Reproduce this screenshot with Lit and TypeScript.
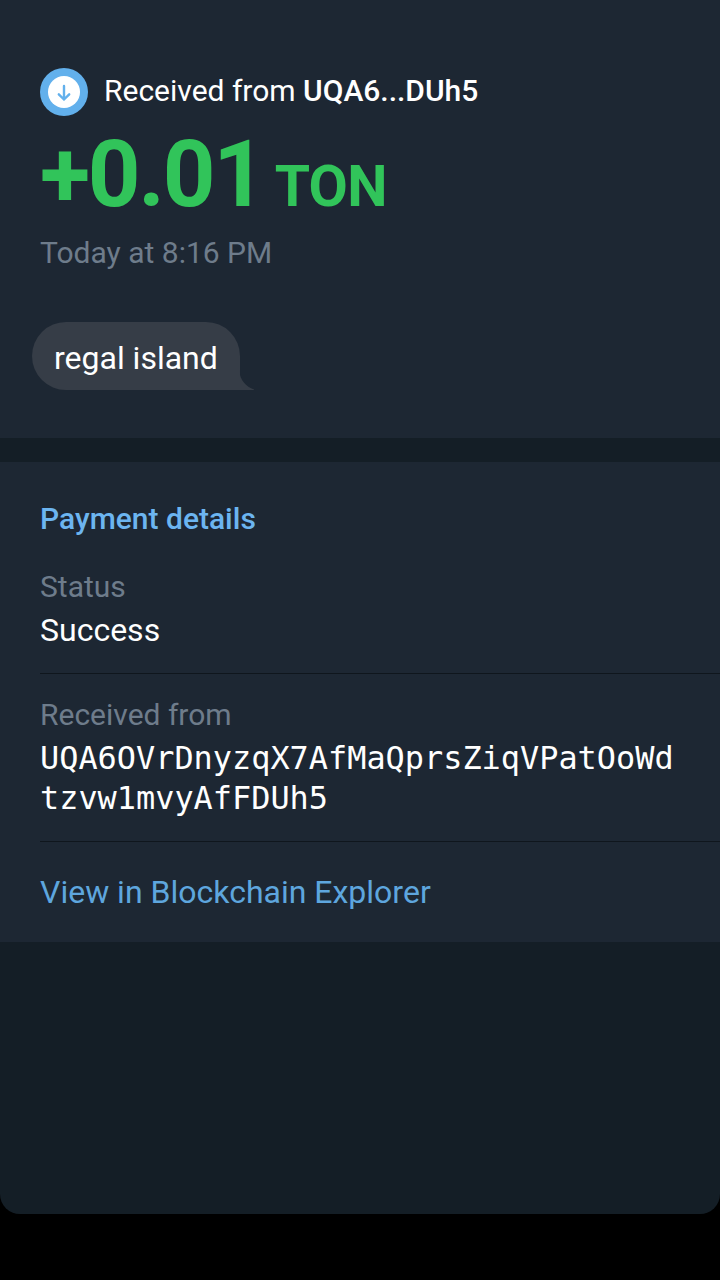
import { LitElement, html, css } from "lit";
import { customElement } from "lit/decorators.js";

@customElement("app-root")
export class AppRoot extends LitElement {
  static styles = css`
    :host { display: block; width: 720px; height: 1280px; background: #000; font-family: Roboto, sans-serif; color: #fff; overflow: hidden; }
    .sheet { height: 1214px; background: #141e26; border-radius: 0 0 20px 20px; overflow: hidden; }
    .top { height: 438px; box-sizing: border-box; background: #1d2733; padding: 68px 0 0 40px; }
    .from { display: flex; align-items: center; gap: 16px; height: 48px; font-size: 30px; }
    .from span { position: relative; top: -2px; }
    .from b { font-weight: 500; }
    .icon { width: 48px; height: 48px; display: block; }
    .amount { display: flex; align-items: baseline; gap: 11px; margin-top: 12px; color: #31c45a; font-weight: 700; line-height: 94px; height: 91px; }
    .num { font-size: 92px; letter-spacing: -2.3px; }
    .cur { font-size: 57px; letter-spacing: -0.6px; }
    .date { margin-top: 15px; font-size: 30px; line-height: 38px; color: #6e7c8b; }
    .bubble { position: relative; width: max-content; margin: 50px 0 0 -8px; padding: 0 22px; height: 68px; line-height: 73px; background: #363d47; border-radius: 34px 34px 0 34px; font-size: 32px; }
    .tail { position: absolute; left: 100%; bottom: 0; margin-left: -1px; width: 15px; height: 20px; display: block; }
    .details { margin-top: 24px; background: #1d2733; height: 480px; box-sizing: border-box; padding: 38px 0 0 40px; }
    .title { font-size: 30px; font-weight: 500; line-height: 38px; color: #6cb5f0; }
    .row { border-bottom: 1px solid #0f161d; }
    .label { font-size: 30px; line-height: 38px; color: #6e7c8b; }
    .val { font-size: 32px; line-height: 38px; margin-top: 5px; }
    .r1 { margin-top: 30px; height: 105px; }
    .r2 { margin-top: 22px; height: 145px; }
    .mono { font-family: "DejaVu Sans Mono", monospace; font-size: 31.9px; line-height: 40px; width: 640px; word-break: break-all; margin-top: 4px; }
    .link { margin-top: 31px; font-size: 32px; line-height: 38px; color: #5ea6de; }
  `;

  render() {
    return html`<div class="sheet">
      <section class="top">
        <div class="from">
          <svg class="icon" viewBox="0 0 48 48">
            <circle cx="24" cy="24" r="24" fill="#62b0ec"/>
            <circle cx="24" cy="24" r="16" fill="#fff"/>
            <path d="M24 18v13.5M18.8 26.3L24 31.5l5.2-5.2" fill="none" stroke="#62b0ec" stroke-width="2.4" stroke-linecap="round" stroke-linejoin="round"/>
          </svg>
          <span>Received from <b>UQA6...DUh5</b></span>
        </div>
        <div class="amount"><span class="num">+0.01</span><span class="cur">TON</span></div>
        <div class="date">Today at 8:16 PM</div>
        <div class="bubble">regal island
          <svg class="tail" viewBox="0 0 15 20"><path d="M0 0C1 10 7 17 15 19.5V20H0Z" fill="#363d47"/></svg>
        </div>
      </section>
      <section class="details">
        <div class="title">Payment details</div>
        <div class="row r1"><div class="label">Status</div><div class="val">Success</div></div>
        <div class="row r2"><div class="label">Received from</div><div class="mono">UQA6OVrDnyzqX7AfMaQprsZiqVPatOoWdtzvw1mvyAfFDUh5</div></div>
        <div class="link">View in Blockchain Explorer</div>
      </section>
    </div>`;
  }
}
